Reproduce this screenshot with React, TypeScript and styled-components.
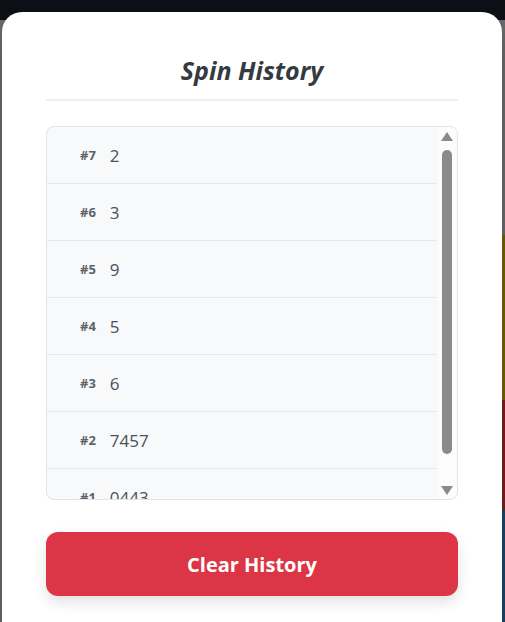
import styled, { createGlobalStyle } from "styled-components";

const GlobalStyle = createGlobalStyle`
  html, body {
    margin: 0;
    padding: 0;
    background: #0d1117;
  }
  * {
    box-sizing: border-box;
  }
`;

const Scene = styled.div`
  position: relative;
  width: 505px;
  height: 622px;
  overflow: hidden;
  display: grid;
  grid-template-rows: 20px 1fr;
  font-family: "Open Sans", "Noto Sans", sans-serif;
`;

const TopBar = styled.div`
  background: #0d1117;
`;

const Backdrop = styled.div`
  display: flex;
  justify-content: flex-end;
  background: #6f6f6f;
`;

const WheelEdge = styled.div`
  width: 4px;
  display: flex;
  flex-direction: column;
`;

const Segment = styled.div<{ $color: string; $size: number }>`
  height: ${(p) => p.$size}px;
  background: ${(p) => p.$color};
`;

const Modal = styled.div`
  position: absolute;
  left: 2px;
  top: 12px;
  width: 500px;
  height: 640px;
  background: #ffffff;
  border-radius: 20px;
  padding: 44px 44px 0;
  box-shadow: 0 10px 30px rgba(0, 0, 0, 0.3);
`;

const Title = styled.h2`
  margin: 0;
  padding-bottom: 14px;
  border-bottom: 2px solid #efefef;
  text-align: center;
  font-size: 25px;
  line-height: 29px;
  font-style: italic;
  font-weight: 700;
  color: #343a40;
`;

const ListBox = styled.div`
  display: flex;
  margin-top: 25px;
  height: 374px;
  background: #f8f9fa;
  border: 1px solid #e2e4e6;
  border-radius: 8px;
  overflow: hidden;
`;

const List = styled.ul`
  flex: 1;
  list-style: none;
  margin: 0;
  padding: 0;
  overflow: hidden;
`;

const Row = styled.li`
  display: flex;
  align-items: center;
  gap: 14px;
  height: 57px;
  padding-left: 33px;
  border-bottom: 1px solid #e6e8ea;
`;

const SpinNo = styled.span`
  font-size: 13px;
  font-weight: 700;
  color: #5c636a;
`;

const SpinValue = styled.span`
  font-size: 17px;
  font-weight: 400;
  color: #4a5056;
`;

const Rail = styled.div`
  width: 20px;
  display: flex;
  flex-direction: column;
  align-items: center;
  background: #fcfcfd;
`;

const ArrowButton = styled.div`
  height: 18px;
  display: flex;
  align-items: center;
  justify-content: center;
  flex-shrink: 0;
`;

const Track = styled.div`
  flex: 1;
  width: 100%;
  padding: 5px;
  display: flex;
  flex-direction: column;
`;

const Thumb = styled.div<{ $ratio: number }>`
  height: ${(p) => p.$ratio * 100}%;
  border-radius: 5px;
  background: #8a8a8a;
`;

const ClearButton = styled.button`
  display: block;
  width: 100%;
  height: 64px;
  margin-top: 32px;
  border: none;
  border-radius: 12px;
  background: #dc3545;
  color: #ffffff;
  font-family: inherit;
  font-size: 20px;
  font-weight: 700;
  cursor: pointer;
  box-shadow: 0 6px 14px rgba(0, 0, 0, 0.12);
`;

const spins = [
  { id: 7, value: "2" },
  { id: 6, value: "3" },
  { id: 5, value: "9" },
  { id: 4, value: "5" },
  { id: 3, value: "6" },
  { id: 2, value: "7457" },
  { id: 1, value: "0443" },
];

const Arrow = ({ down }: { down?: boolean }) => (
  <svg width="12" height="9" viewBox="0 0 12 9">
    <polygon points={down ? "0,0 12,0 6,9" : "6,0 12,9 0,9"} fill="#8a8a8a" />
  </svg>
);

const App = () => {
  const visible = 372;
  const total = spins.length * 57;
  return (
    <>
      <GlobalStyle />
      <Scene>
        <TopBar />
        <Backdrop>
          <WheelEdge>
            <Segment $color="#6f6f6f" $size={215} />
            <Segment $color="#7b6308" $size={165} />
            <Segment $color="#7a2022" $size={110} />
            <Segment $color="#1c4a6c" $size={112} />
          </WheelEdge>
        </Backdrop>
        <Modal>
          <Title>Spin History</Title>
          <ListBox>
            <List>
              {spins.map(({ id, value }) => (
                <Row key={id}>
                  <SpinNo>#{id}</SpinNo>
                  <SpinValue>{value}</SpinValue>
                </Row>
              ))}
            </List>
            <Rail>
              <ArrowButton>
                <Arrow />
              </ArrowButton>
              <Track>
                <Thumb $ratio={visible / total} />
              </Track>
              <ArrowButton>
                <Arrow down />
              </ArrowButton>
            </Rail>
          </ListBox>
          <ClearButton>Clear History</ClearButton>
        </Modal>
      </Scene>
    </>
  );
};

export default App;
